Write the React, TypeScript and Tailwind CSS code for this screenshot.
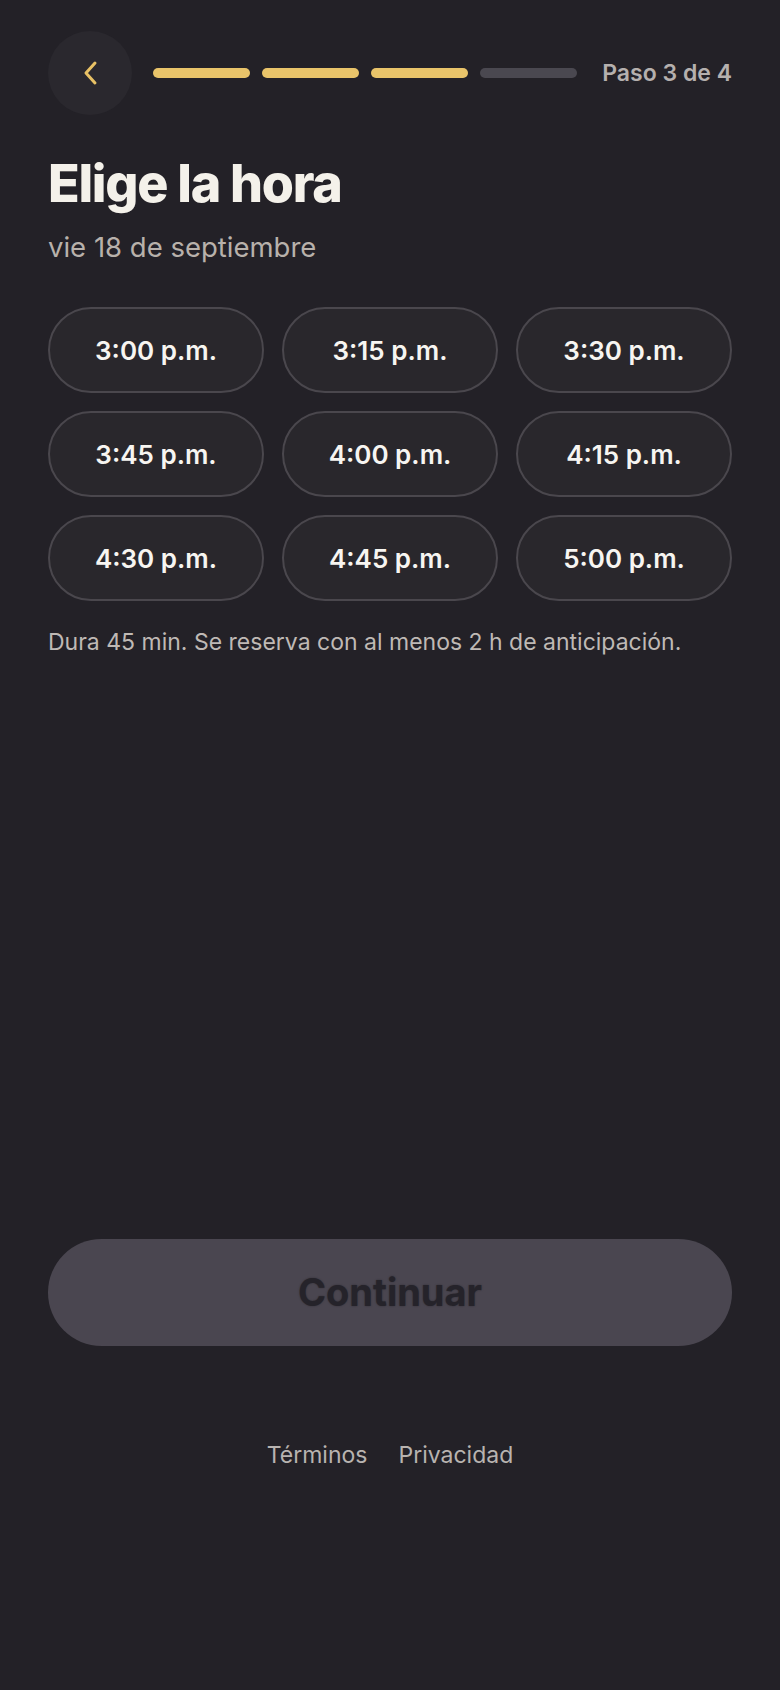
import React from "react";

const SLOTS = [
  "3:00 p.m.",
  "3:15 p.m.",
  "3:30 p.m.",
  "3:45 p.m.",
  "4:00 p.m.",
  "4:15 p.m.",
  "4:30 p.m.",
  "4:45 p.m.",
  "5:00 p.m.",
];

const STEPS = 4;
const CURRENT = 3;

export default function App() {
  return (
    <div className="min-h-[1690px] bg-[#232127] px-12 font-['Inter','Noto_Sans',sans-serif]">
      {/* header: back + progress + step label */}
      <header className="flex items-center pt-[31px]">
        <button
          type="button"
          aria-label="Volver"
          className="flex h-[84px] w-[84px] shrink-0 items-center justify-center rounded-full bg-[#2a282e]"
        >
          <svg width="16" height="26" viewBox="0 0 16 26" fill="none" aria-hidden>
            <path d="M13 3 L4 13 L13 23" stroke="#e8c165" strokeWidth="3" strokeLinecap="round" strokeLinejoin="round" />
          </svg>
        </button>

        <div className="ml-[21px] mr-[25px] flex flex-1 gap-3">
          {Array.from({ length: STEPS }).map((_, i) => (
            <span
              key={i}
              className={`block h-[10px] flex-1 rounded-full ${i < CURRENT ? "bg-[#e9c46a]" : "bg-[#4a4850]"}`}
            />
          ))}
        </div>

        <span className="text-[23px] font-semibold text-[#b5b0ae]">
          Paso {CURRENT} de {STEPS}
        </span>
      </header>

      <h1 className="mt-[43px] text-[52px] font-extrabold leading-[52px] tracking-[-0.025em] text-[#f4f1ea]">
        Elige la hora
      </h1>
      <p className="mt-[20px] text-[27.5px] leading-[34px] text-[#b8b1ab]">vie 18 de septiembre</p>

      <div className="mt-[43px] grid grid-cols-3 gap-x-[18px] gap-y-[18px]">
        {SLOTS.map((s) => (
          <button
            key={s}
            type="button"
            className="flex h-[86px] items-center justify-center rounded-full border-2 border-[#4a474d] bg-[#29272c] text-[26px] font-semibold text-[#f7f5f1]"
          >
            {s}
          </button>
        ))}
      </div>

      <p className="mt-[25px] text-[23px] leading-[32px] text-[#bfb9b5]">
        Dura 45 min. Se reserva con al menos 2 h de anticipación.
      </p>

      <button
        type="button"
        disabled
        className="mt-[581px] flex h-[107px] w-full items-center justify-center rounded-full bg-[#4a4650] text-[38px] font-bold text-[#25232a] [text-shadow:0_0_2px_rgba(0,0,0,0.35)]"
      >
        Continuar
      </button>

      <footer className="mt-[94px] flex justify-center gap-[31px] text-[23px] leading-[30px] text-[#b8b3b0]">
        <a href="#">Términos</a>
        <a href="#">Privacidad</a>
      </footer>
    </div>
  );
}
